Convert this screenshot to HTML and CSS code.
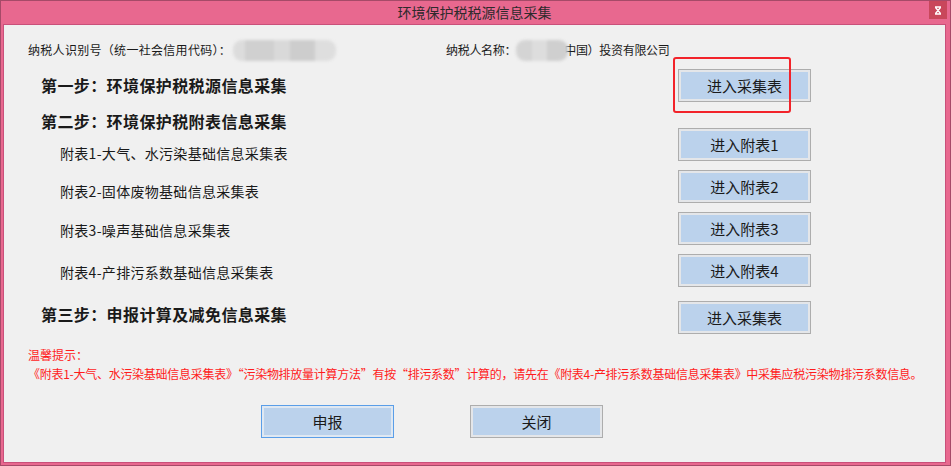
FILE: index.html
```html
<!DOCTYPE html>
<html lang="zh-CN">
<head>
  <meta charset="UTF-8" />
  <title>环境保护税税源信息采集</title>
  <link rel="stylesheet" href="styles.css">
</head>
<body>
  <div class="window">
    <div class="titlebar">
      <span></span>
      <div class="title">环境保护税税源信息采集</div>
      <button class="close-btn" title="关闭">
        <svg width="8" height="9" viewBox="0 0 8 9">
          <path d="M1 1h6M1 8h6M1.5 1.5l5 6M6.5 1.5l-5 6" stroke="#fff" stroke-width="1.3" fill="none" />
        </svg>
      </button>
    </div>

    <div class="panel">
      <div class="taxpayer">
        <div class="taxpayer-id">纳税人识别号（统一社会信用代码）：<span class="mask mask-id"></span></div>
        <div class="taxpayer-name">纳税人名称：<span class="mask mask-name"></span><span class="name-rest">中国）投资有限公司</span></div>
      </div>

      <div class="steps">
        <div class="labels">
          <div class="step step-one">第一步：环境保护税税源信息采集</div>
          <div class="step step-two">第二步：环境保护税附表信息采集</div>
          <div class="sub sub-1">附表1-大气、水污染基础信息采集表</div>
          <div class="sub sub-2">附表2-固体废物基础信息采集表</div>
          <div class="sub sub-3">附表3-噪声基础信息采集表</div>
          <div class="sub sub-4">附表4-产排污系数基础信息采集表</div>
          <div class="step step-three">第三步：申报计算及减免信息采集</div>
        </div>
        <div class="actions">
          <div class="btn-wrap first">
            <button class="btn">进入采集表</button>
            <span class="highlight"></span>
          </div>
          <button class="btn attach-1">进入附表1</button>
          <button class="btn">进入附表2</button>
          <button class="btn">进入附表3</button>
          <button class="btn">进入附表4</button>
          <button class="btn last">进入采集表</button>
        </div>
      </div>

      <div class="tips">
        <div>温馨提示：</div>
        <div class="tips-line">《附表1-大气、水污染基础信息采集表》“污染物排放量计算方法”有按“排污系数”计算的，请先在《附表4-产排污系数基础信息采集表》中采集应税污染物排污系数信息。</div>
      </div>

      <div class="footer">
        <button class="btn focused">申报</button>
        <button class="btn">关闭</button>
      </div>
    </div>
  </div>
</body>
</html>
```

FILE: styles.css
```css
body {
  margin: 0;
  width: 951px;
  height: 466px;
  overflow: hidden;
  font-family: 'Noto Sans CJK SC', 'Noto Sans', sans-serif;
  color: #1a1a1a;
}
.window {
  box-sizing: border-box;
  width: 951px;
  height: 466px;
  background-color: #e8688f;
  border: 1px solid #a64a68;
  padding: 0 4px 2px 2px;
  display: flex;
  flex-direction: column;
}
.titlebar {
  height: 23px;
  display: grid;
  grid-template-columns: 1fr auto 1fr;
  align-items: center;
}
.title {
  font-size: 14px;
  color: #2e2a2c;
  line-height: 23px;
}
.close-btn {
  justify-self: end;
  align-self: start;
  margin-right: -1px;
  width: 18px;
  height: 18px;
  padding: 0;
  border: none;
  background-color: #c9475b;
  display: flex;
  align-items: center;
  justify-content: center;
}
.panel {
  flex: 1;
  background-color: #f0f0f0;
  border: 1px solid #c9507a;
  padding: 14px 0 0 24px;
}
.taxpayer {
  display: flex;
  align-items: center;
  height: 22px;
  font-size: 12px;
  line-height: 22px;
}
.taxpayer-id {
  width: 418px;
  display: flex;
  align-items: center;
  white-space: nowrap;
  letter-spacing: 0.3px;
}
.taxpayer-name {
  display: flex;
  align-items: center;
  white-space: nowrap;
  letter-spacing: -0.3px;
}
.mask {
  display: inline-block;
  height: 21px;
  border-radius: 9px;
  filter: blur(1.5px);
  position: relative;
  z-index: 1;
}
.mask-id {
  width: 103px;
  margin-left: 2px;
  background: linear-gradient(90deg, #dcdcdc 0 12%, #d0d0d0 12% 40%, #d9d9d9 40% 55%, #cdcdcd 55% 80%, #dedede 80%);
}
.mask-name {
  width: 52px;
  background: linear-gradient(90deg, #d4d4d4 0 30%, #dddddd 30% 60%, #cfcfcf 60%);
}
.name-rest {
  margin-left: -4px;
}
.steps {
  display: flex;
}
.labels {
  width: 650px;
  display: flex;
  flex-direction: column;
}
.step {
  font-size: 16px;
  font-weight: bold;
  line-height: 20px;
  margin-left: 13px;
  letter-spacing: 0.4px;
}
.sub {
  font-size: 14px;
  line-height: 20px;
  margin-left: 32px;
  letter-spacing: 0.3px;
}
.step-one { margin-top: 14px; }
.step-two { margin-top: 16px; }
.sub-1 { margin-top: 12px; }
.sub-2 { margin-top: 18px; }
.sub-3 { margin-top: 19px; }
.sub-4 { margin-top: 22px; }
.step-three { margin-top: 22px; }
.actions {
  display: flex;
  flex-direction: column;
  gap: 9px;
  padding-top: 8px;
}
.btn {
  box-sizing: border-box;
  width: 133px;
  height: 33px;
  border: 1px solid #adadad;
  background-color: #bbd2ec;
  box-shadow: inset 0 0 0 2px #e4e6e9;
  font-family: 'Noto Sans CJK SC', sans-serif;
  font-size: 15px;
  color: #1a1a1a;
  padding: 0;
}
.btn-wrap {
  position: relative;
  height: 33px;
}
.btn-wrap.first {
  margin-bottom: 17px;
}
.highlight {
  position: absolute;
  left: -5px;
  top: -12px;
  width: 118px;
  height: 56px;
  box-sizing: border-box;
  border: 2.5px solid #f2232a;
  border-radius: 3px;
}
.last {
  margin-top: 5px;
}
.tips {
  margin-top: 11px;
  color: #ff1c1c;
  font-size: 12px;
  line-height: 19px;
}
.tips-line {
  white-space: nowrap;
  letter-spacing: -0.27px;
}
.footer {
  display: flex;
  gap: 76px;
  margin-top: 22px;
  padding-left: 233px;
}
.btn.focused {
  border-color: #5a9ee8;
  box-shadow: inset 0 0 0 2px #dfe8f2;
}
```
